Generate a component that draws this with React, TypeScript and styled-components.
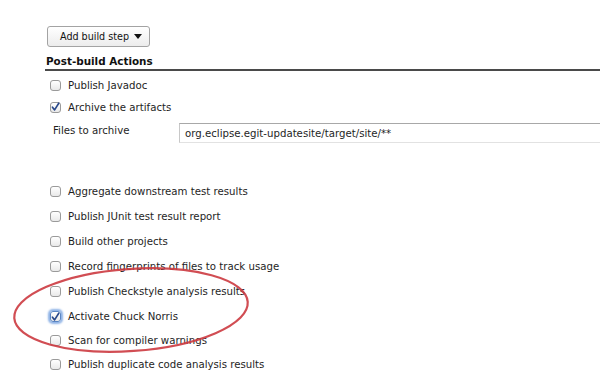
import styled, { createGlobalStyle } from "styled-components";

const GlobalStyle = createGlobalStyle`
  html, body {
    margin: 0;
    padding: 0;
    background: #ffffff;
  }
  body {
    font-family: "DejaVu Sans", Verdana, sans-serif;
    color: #1e1e1e;
    overflow: hidden;
  }
`;

const publishers = [
  { label: "Aggregate downstream test results" },
  { label: "Publish JUnit test result report" },
  { label: "Build other projects" },
  { label: "Record fingerprints of files to track usage" },
  { label: "Publish Checkstyle analysis results" },
  { label: "Activate Chuck Norris", checked: true, focused: true },
  { label: "Scan for compiler warnings", tight: true },
  { label: "Publish duplicate code analysis results" },
];

const CheckBox = ({ checked, focused }: { checked?: boolean; focused?: boolean }) => (
  <Box $focused={focused}>
    {checked && (
      <svg width="10" height="10" viewBox="0 0 10 10">
        <path
          d="M1.6 5.2 L4 8.2 L8.6 0.8"
          fill="none"
          stroke="#27478a"
          strokeWidth="1.8"
          strokeLinecap="round"
          strokeLinejoin="round"
        />
      </svg>
    )}
  </Box>
);

const App = () => {
  return (
    <Page>
      <GlobalStyle />
      <Toolbar>
        <DropButton>
          Add build step
          <Caret />
        </DropButton>
      </Toolbar>
      <Section>
        <SectionTitle>Post-build Actions</SectionTitle>
        <Row $height={22}>
          <CheckBox />
          <Label>Publish Javadoc</Label>
        </Row>
        <Row $height={22}>
          <CheckBox checked />
          <Label>Archive the artifacts</Label>
        </Row>
        <FieldRow>
          <FieldLabel>Files to archive</FieldLabel>
          <TextInput>org.eclipse.egit-updatesite/target/site/**</TextInput>
        </FieldRow>
        <List>
          {publishers.map((p) => (
            <Row key={p.label} $height={p.tight ? 23 : 25}>
              <CheckBox checked={p.checked} focused={p.focused} />
              <Label>{p.label}</Label>
            </Row>
          ))}
        </List>
      </Section>
      <Annotation width="600" height="377" viewBox="0 0 600 377">
        <ellipse
          cx="131"
          cy="310"
          rx="117"
          ry="41"
          transform="rotate(-4 131 310)"
          fill="none"
          stroke="#cc3a40"
          strokeWidth="2.2"
          opacity="0.9"
        />
      </Annotation>
    </Page>
  );
};

const Page = styled.div`
  position: relative;
  width: 600px;
  height: 377px;
  overflow: hidden;
`;

const Toolbar = styled.div`
  display: flex;
  padding: 26px 0 0 47px;
`;

const DropButton = styled.div`
  display: flex;
  align-items: center;
  justify-content: space-between;
  box-sizing: border-box;
  width: 103px;
  height: 21px;
  padding: 0 7px 0 12px;
  border: 1px solid #a3a3a3;
  border-radius: 3px;
  background: linear-gradient(#ffffff, #ececec);
  font-size: 9.6px;
  color: #111;
`;

const Caret = styled.span`
  width: 0;
  height: 0;
  border-left: 4px solid transparent;
  border-right: 4px solid transparent;
  border-top: 5px solid #111;
`;

const Section = styled.div`
  display: flex;
  flex-direction: column;
  margin: 8px 0 0 45px;
`;

const SectionTitle = styled.div`
  padding: 0 0 1px 1px;
  font-size: 10.4px;
  font-weight: bold;
  line-height: 13px;
  color: #111;
  border-bottom: 2px solid #4a4a4a;
  margin-bottom: 3px;
`;

const Row = styled.div<{ $height: number }>`
  display: flex;
  align-items: center;
  gap: 7px;
  height: ${(p) => p.$height}px;
  padding-left: 5px;
`;

const Box = styled.span<{ $focused?: boolean }>`
  display: flex;
  align-items: center;
  justify-content: center;
  box-sizing: border-box;
  width: 11px;
  height: 11px;
  border: 1px solid ${(p) => (p.$focused ? "#5b86c4" : "#9a9a9a")};
  border-radius: 3px;
  background: linear-gradient(#ffffff, #e9e9e9);
  box-shadow: ${(p) => (p.$focused ? "0 0 2px 2px #8fb3e6" : "none")};
`;

const Label = styled.span`
  font-size: 10.2px;
  color: #1e1e1e;
`;

const FieldRow = styled.div`
  display: flex;
  align-items: center;
  margin-top: 5px;
  padding-left: 8px;
`;

const FieldLabel = styled.span`
  width: 126px;
  font-size: 10.2px;
  padding-bottom: 6px;
`;

const TextInput = styled.div`
  flex: 1;
  display: flex;
  align-items: center;
  box-sizing: border-box;
  height: 20px;
  padding-left: 5px;
  border-top: 1px solid #a8a8a8;
  border-left: 1px solid #c8c8c8;
  border-bottom: 1px solid #e2e2e2;
  font-size: 10.2px;
  color: #1e1e1e;
`;

const List = styled.div`
  display: flex;
  flex-direction: column;
  margin-top: 36px;
`;

const Annotation = styled.svg`
  position: absolute;
  left: 0;
  top: 0;
  pointer-events: none;
`;

export default App;
